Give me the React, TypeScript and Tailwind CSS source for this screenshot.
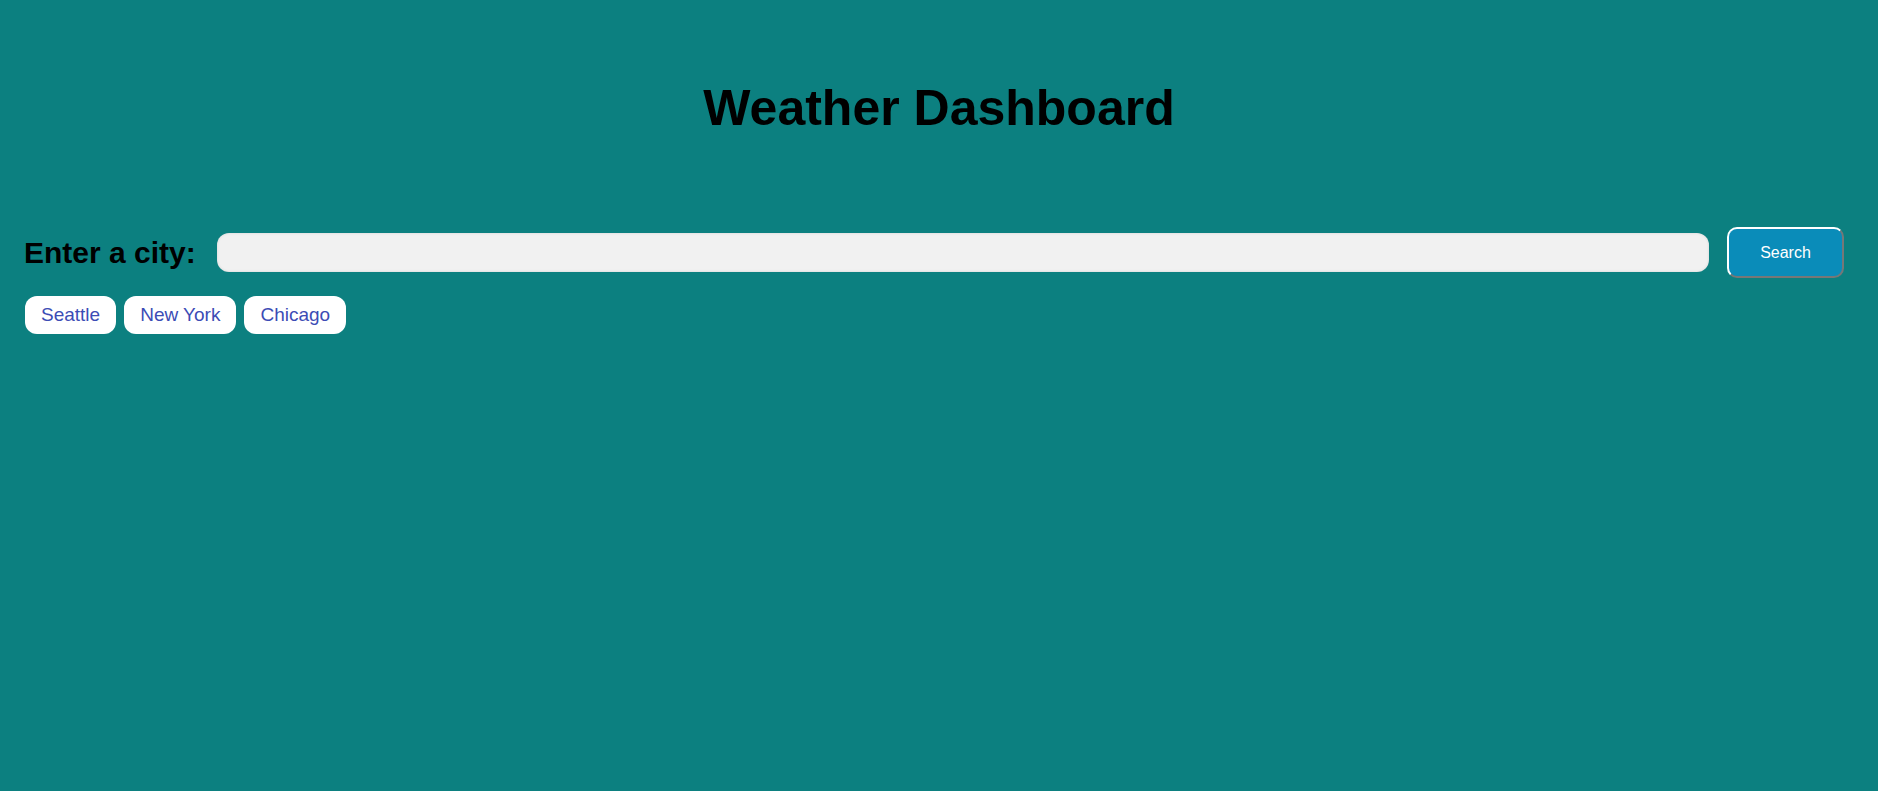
export default function App() {
  const cities = ['Seattle', 'New York', 'Chicago'];

  return (
    <div className="min-h-screen bg-[#0c8080] px-6 pt-[78px] font-['Liberation_Sans',Arial,sans-serif]">
      <h1 className="text-center text-[50px] leading-[60px] font-bold text-black">Weather Dashboard</h1>

      <form className="mt-[89px] flex items-center pr-[10px]" onSubmit={(e) => e.preventDefault()}>
        <label htmlFor="city" className="mr-[21px] text-[30px] font-bold text-black">
          Enter a city:
        </label>
        <input
          id="city"
          type="text"
          className="h-[39px] flex-1 rounded-[12px] bg-[#f1f1f1] px-3 text-lg shadow-[inset_0_0_3px_rgba(0,0,0,0.12)] outline-none"
        />
        <button
          type="submit"
          className="ml-[18px] h-[51px] w-[117px] rounded-[10px] border-2 border-t-white border-r-[#777] border-b-[#777] border-l-white bg-[#0a8cb9] text-[16px] font-medium text-white"
        >
          Search
        </button>
      </form>

      <div className="mt-[18px] flex gap-2 pl-px">
        {cities.map((city) => (
          <button
            key={city}
            type="button"
            className="h-[38px] rounded-[12px] bg-white px-4 text-[19px] text-[#3c4cb5]"
          >
            {city}
          </button>
        ))}
      </div>
    </div>
  );
}
